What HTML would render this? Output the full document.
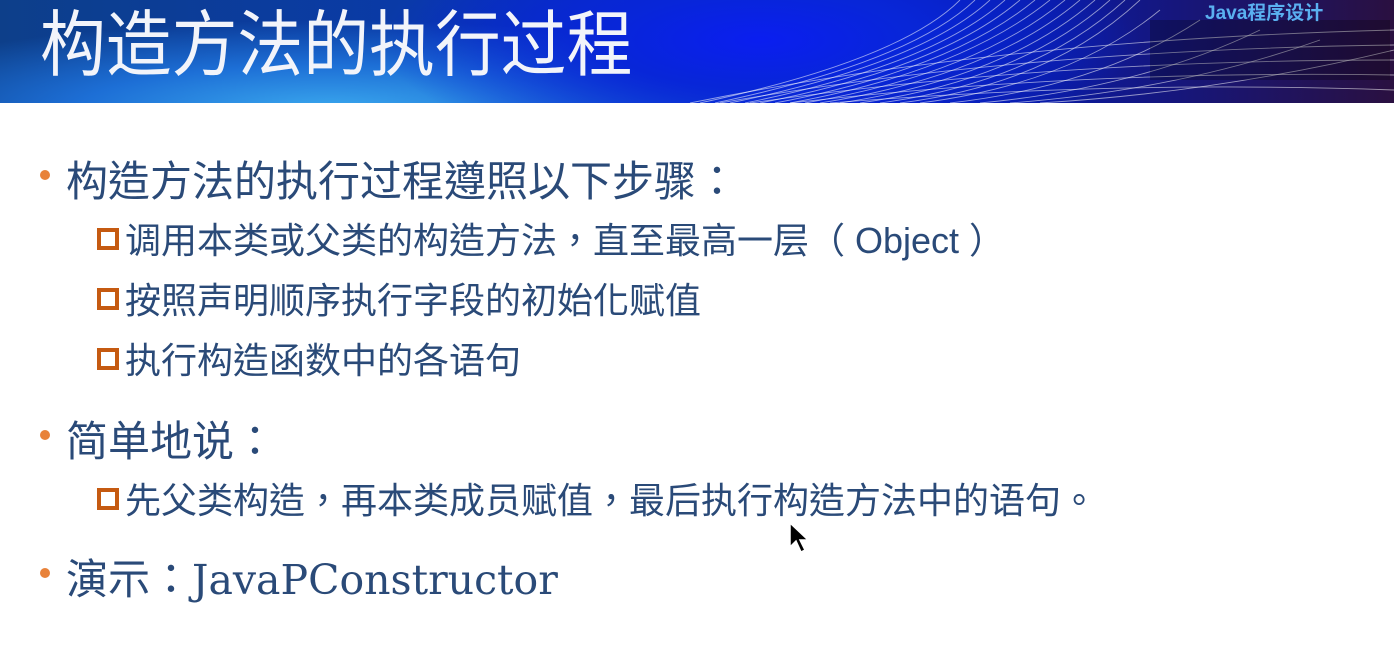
<!DOCTYPE html>
<html><head><meta charset="utf-8"><style>
*{margin:0;padding:0}
body{width:1394px;height:647px;background:#fff;overflow:hidden;position:relative;font-family:"Liberation Sans","Noto Sans CJK TC",sans-serif}
.hdr{position:absolute;left:0;top:0;width:1394px;height:103px;overflow:hidden;
background:radial-gradient(ellipse 380px 120px at 760px 40px,#0a1ef0 0%,#0826d8 40%,transparent 100%),
radial-gradient(ellipse 500px 90px at 330px 110px,#3aa8ee 0%,#1d6fd6 50%,transparent 100%),
linear-gradient(90deg,#0d3f8a 0%,#0a3aa8 30%,#0520d0 55%,#0a1aa0 75%,#2a1040 100%)}
.title{position:absolute;left:40px;top:-6px;color:#f2f4fa;font-size:72px;line-height:90px;font-family:"Noto Sans CJK SC",sans-serif;transform:scaleX(0.914);transform-origin:0 0;white-space:nowrap}
.jv{position:absolute;left:1205px;top:-2px;color:#5ab0f0;font-size:19px;font-weight:bold}
.t{position:absolute;color:#2a4a78;font-family:"Liberation Sans","Noto Sans CJK TC",sans-serif;white-space:nowrap}
.m{font-size:42px;left:66px}
.s{font-size:36px;left:125px}
.dot{position:absolute;left:40px;width:10px;height:10px;border-radius:50%;background:#e8823a}
.sq{position:absolute;left:97px;width:14px;height:14px;border:4.5px solid #c55a11}
</style></head><body>
<div class="hdr">
<svg width="1394" height="103" style="position:absolute;left:0;top:0">
<g fill="none" stroke="#ffffff" stroke-opacity="0.55" stroke-width="0.9">
<path d="M700 103 Q900 60 960 0"/><path d="M715 103 Q910 62 975 0"/><path d="M730 103 Q920 64 990 0"/><path d="M745 103 Q930 66 1005 0"/><path d="M760 103 Q940 68 1020 0"/><path d="M775 103 Q950 70 1035 0"/><path d="M790 103 Q960 72 1050 0"/><path d="M805 103 Q975 74 1065 0"/><path d="M820 103 Q990 76 1080 0"/><path d="M840 103 Q1005 78 1095 0"/><path d="M860 103 Q1020 80 1110 0"/><path d="M880 103 Q1035 82 1125 0"/><path d="M900 103 Q1050 84 1140 0"/>
<path d="M920 103 Q1070 84 1160 10"/><path d="M950 103 Q1100 86 1200 20"/><path d="M980 103 Q1140 88 1260 30"/><path d="M1010 103 Q1180 90 1320 40"/><path d="M1040 103 Q1220 92 1394 50"/>
<path d="M690 103 Q1000 40 1394 30"/><path d="M720 103 Q1020 50 1394 45"/><path d="M750 103 Q1050 60 1394 60"/><path d="M790 103 Q1080 70 1394 75"/><path d="M830 103 Q1120 80 1394 90"/>
</g>
<rect x="1150" y="20" width="240" height="60" fill="#000" opacity="0.25"/>
</svg>
<div class="title">构造方法的执行过程</div>
<div class="jv">Java程序设计</div>
</div>
<div class="dot" style="top:170px"></div><div class="t m" style="top:148px">构造方法的执行过程遵照以下步骤：</div>
<div class="sq" style="top:228px"></div><div class="t s" style="top:212px">调用本类或父类的构造方法，直至最高一层（ Object ）</div>
<div class="sq" style="top:288px"></div><div class="t s" style="top:272px">按照声明顺序执行字段的初始化赋值</div>
<div class="sq" style="top:348px"></div><div class="t s" style="top:332px">执行构造函数中的各语句</div>
<div class="dot" style="top:430px"></div><div class="t m" style="top:408px">简单地说：</div>
<div class="sq" style="top:488px"></div><div class="t s" style="top:472px">先父类构造，再本类成员赋值，最后执行构造方法中的语句。</div>
<div class="dot" style="top:568px"></div><div class="t m" style="top:546px">演示：<span style="font-family:'DejaVu Serif',serif;font-size:41px">JavaPConstructor</span></div>
<svg style="position:absolute;left:788px;top:521px" width="20" height="34"><path d="M2 2 L2 26 L8 20 L13 31 L17 29 L12 19 L20 19 Z" fill="#000" stroke="#fff" stroke-width="1.5"/></svg>
</body></html>
